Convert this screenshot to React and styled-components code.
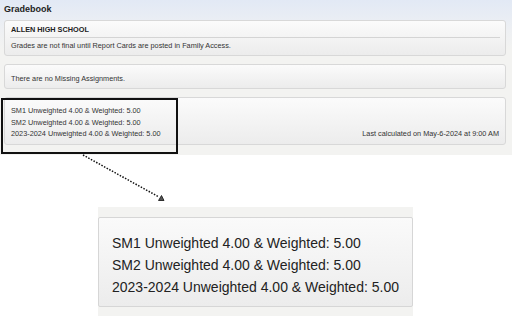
import React from 'react';
import styled, { createGlobalStyle } from 'styled-components';

const GlobalStyle = createGlobalStyle`
  html, body {
    margin: 0;
    padding: 0;
    background: #ffffff;
  }
  body {
    font-family: "Liberation Sans", Arial, sans-serif;
    color: #333;
  }
`;

const Page = styled.div`
  position: relative;
  width: 512px;
  height: 320px;
  overflow: hidden;
`;

const Top = styled.div`
  height: 155px;
  box-sizing: border-box;
  padding: 4px 6px 0 4px;
  background: linear-gradient(#e2e9f5 0, #eef0f3 30px, #f3f3f1 50px, #f3f3f1 100%);
`;

const Title = styled.div`
  font-size: 9px;
  line-height: 10px;
  font-weight: bold;
  color: #222;
  margin-bottom: 6px;
`;

const Card = styled.div`
  border: 1px solid #d8d8d8;
  border-radius: 3px;
  background: linear-gradient(#fbfbfb, #ececec);
  padding: ${p => p.$pad || '0 5px'};
  margin-bottom: 8px;
  font-size: 7.3px;
  line-height: 10px;
  color: #333;
`;

const CardHead = styled.div`
  font-weight: bold;
  color: #222;
  padding: 4px 1px 2px;
  border-bottom: 1px solid #d4d4d4;
`;

const CardText = styled.div`
  padding: 3px 1px 4px;
`;

const GpaRow = styled.div`
  display: flex;
  justify-content: space-between;
  align-items: flex-end;
  line-height: 11.5px;
  padding: 7px 1px 4px;
`;

const Line = styled.div``;

const Highlight = styled.div`
  position: absolute;
  left: 1px;
  top: 98px;
  width: 177px;
  height: 56px;
  box-sizing: border-box;
  border: 2px solid #111;
`;

const Arrow = styled.svg`
  position: absolute;
  left: 0;
  top: 0;
  pointer-events: none;
`;

const Lower = styled.div`
  padding: 52px 0 0 98px;
`;

const ZoomBand = styled.div`
  width: 315px;
  height: 109px;
  box-sizing: border-box;
  background: #f3f3f1;
  padding-top: 10px;
`;

const ZoomCard = styled.div`
  border: 1px solid #d6d6d6;
  border-radius: 2px;
  background: linear-gradient(#fafafa, #ececec);
  padding: 14px 13px 8px;
  font-size: 14px;
  line-height: 22px;
  color: #222;
`;

export default function App() {
  const rows = [
    'SM1 Unweighted 4.00 & Weighted: 5.00',
    'SM2 Unweighted 4.00 & Weighted: 5.00',
    '2023-2024 Unweighted 4.00 & Weighted: 5.00',
  ];
  return (
    <Page>
      <GlobalStyle />
      <Top>
        <Title>Gradebook</Title>
        <Card>
          <CardHead>ALLEN HIGH SCHOOL</CardHead>
          <CardText>Grades are not final until Report Cards are posted in Family Access.</CardText>
        </Card>
        <Card $pad="9px 6px 4px">There are no Missing Assignments.</Card>
        <Card>
          <GpaRow>
            <div>
              {rows.map(r => <Line key={r}>{r}</Line>)}
            </div>
            <Line>Last calculated on May-6-2024 at 9:00 AM</Line>
          </GpaRow>
        </Card>
      </Top>
      <Lower>
        <ZoomBand>
          <ZoomCard>
            {rows.map(r => <Line key={r}>{r}</Line>)}
          </ZoomCard>
        </ZoomBand>
      </Lower>
      <Highlight />
      <Arrow width="512" height="320" viewBox="0 0 512 320">
        <line x1="83" y1="155" x2="159" y2="197" stroke="#111" strokeWidth="1.5" strokeDasharray="1.5 1.5" />
        <polygon points="164,200.5 158.5,200.5 161.5,195.5" fill="#555" stroke="#111" strokeWidth="0.8" />
      </Arrow>
    </Page>
  );
}
